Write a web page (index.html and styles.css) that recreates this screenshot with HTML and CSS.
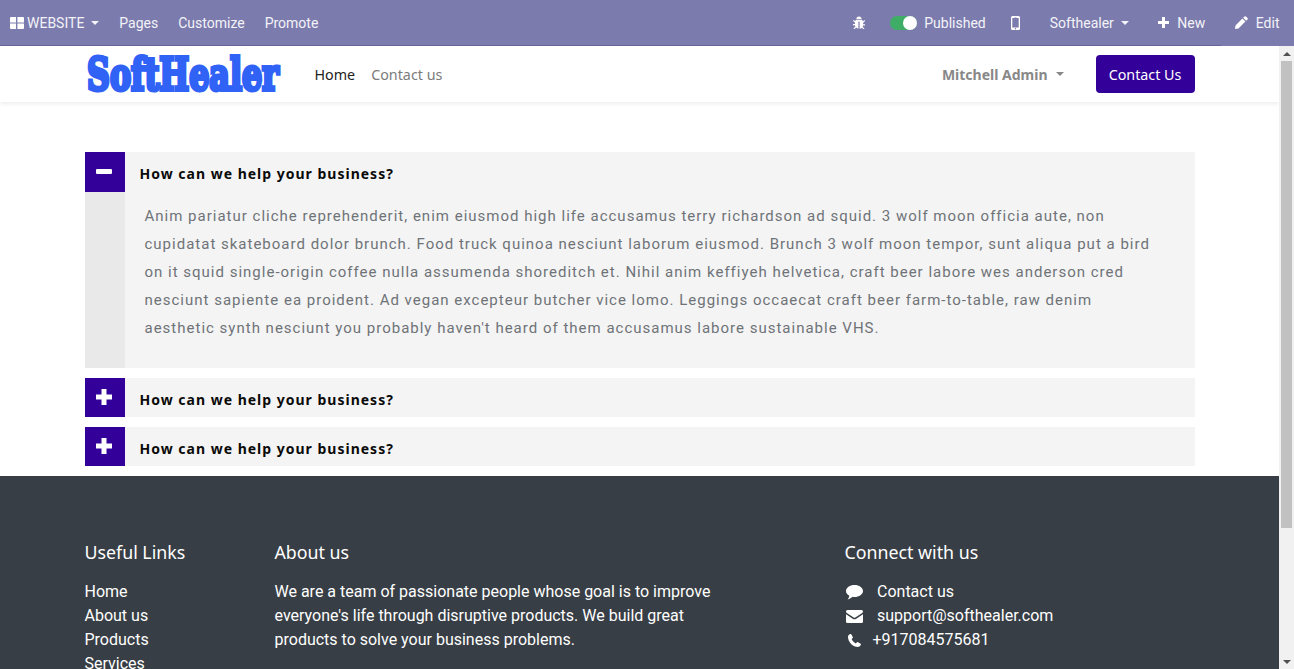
FILE: index.html
```html
<!DOCTYPE html>
<html lang="en">
<head>
<meta charset="utf-8">
<title>SoftHealer</title>
<link rel="stylesheet" href="styles.css">
</head>
<body>
<header class="topbar">
  <div class="top-group">
    <a class="top-item brand-item">
      <svg class="ic ic-grid" viewBox="0 0 14 12"><path d="M0 1a1 1 0 0 1 1-1h5v5.400H0zM7.400 0H13a1 1 0 0 1 1 1v4.400H7.400zM0 6.600h6V12H1a1 1 0 0 1-1-1zM7.400 6.600H14V11a1 1 0 0 1-1 1H7.400z"/></svg>
      <span>WEBSITE</span><i class="caret caret-website"></i>
    </a>
    <a class="top-item">Pages</a>
    <a class="top-item">Customize</a>
    <a class="top-item">Promote</a>
  </div>
  <div class="top-group">
    <svg class="ic ic-bug" viewBox="0 0 12 13"><path d="M3.400 3a2.600 2.600 0 0 1 5.200 0zM3 3.800h6c.5.500.8 1.100.9 1.700l1.400-1.400.8.800-2 2v1.400h2.100v1.100H10c0 .5-.2 1-.4 1.400l1.900 1.900-.8.800-1.800-1.800c-.6.700-1.400 1-2.300 1.100V5.500h-1.200v7.100c-.9-.1-1.700-.4-2.300-1.100L1.300 13.300l-.8-.8 1.900-1.900C2.200 10.200 2 9.700 2 9.200H-.1V8.100H2V6.700l-2-2 .8-.8 1.400 1.400c0-.5.300-1.100.8-1.500z"/></svg>
    <span class="toggle"><i class="knob"></i></span>
    <a class="top-item published">Published</a>
    <svg class="ic ic-mobile" viewBox="0 0 9 14"><path fill-rule="evenodd" d="M1.500 0h6A1.500 1.500 0 0 1 9 1.500v11A1.500 1.500 0 0 1 7.500 14h-6A1.500 1.500 0 0 1 0 12.500v-11A1.500 1.500 0 0 1 1.500 0zM1.300 2v9.500h6.400V2zm2.200-1.100v.5h2V.9zM4.500 12a.7.7 0 1 0 0 1.400.7.7 0 0 0 0-1.400z"/></svg>
    <a class="top-item company">Softhealer<i class="caret caret-company"></i></a>
    <a class="top-item new">
      <svg class="ic ic-plus" viewBox="0 0 11 11"><path d="M4 0h3v4h4v3H7v4H4V7H0V4h4z"/></svg>New
    </a>
    <a class="top-item edit">
      <svg class="ic ic-pencil" viewBox="0 0 13 13"><path d="M9.500.5a1 1 0 0 1 1.400 0l1.600 1.600a1 1 0 0 1 0 1.400L11.200 4.800 8.200 1.800zM7.400 2.600l3 3-6.900 6.900L0 13l.5-3.500z"/></svg>Edit
    </a>
  </div>
</header>
<div class="viewport">
  <div class="page">
    <nav class="site-nav">
      <div class="container nav-row">
        <div class="logo-wrap"><span class="logo">SoftHealer</span></div>
        <a class="nav-link active">Home</a>
        <a class="nav-link">Contact us</a>
        <a class="user">Mitchell Admin<i class="caret caret-user"></i></a>
        <a class="cta">Contact Us</a>
      </div>
    </nav>
    <main class="container accordion">
      <section class="acc-item">
        <div class="acc-head">
          <span class="acc-btn"><svg class="acc-ic" viewBox="0 0 16 16"><rect x="0" y="5" width="16" height="5" rx="1"/></svg></span>
          <h3 class="acc-title">How can we help your business?</h3>
        </div>
        <div class="acc-body">
          <p class="acc-text">Anim pariatur cliche reprehenderit, enim eiusmod high life accusamus terry richardson ad squid. 3 wolf moon officia aute, non cupidatat skateboard dolor brunch. Food truck quinoa nesciunt laborum eiusmod. Brunch 3 wolf moon tempor, sunt aliqua put a bird on it squid single-origin coffee nulla assumenda shoreditch et. Nihil anim keffiyeh helvetica, craft beer labore wes anderson cred nesciunt sapiente ea proident. Ad vegan excepteur butcher vice lomo. Leggings occaecat craft beer farm-to-table, raw denim aesthetic synth nesciunt you probably haven't heard of them accusamus labore sustainable VHS.</p>
        </div>
      </section>
      <section class="acc-item">
        <div class="acc-head closed">
          <span class="acc-btn"><svg class="acc-ic" viewBox="0 0 16 16"><path d="M5.500 0h5v5.500H16v5h-5.500V16h-5v-5.500H0v-5h5.500z"/></svg></span>
          <h3 class="acc-title">How can we help your business?</h3>
        </div>
      </section>
      <section class="acc-item">
        <div class="acc-head closed">
          <span class="acc-btn"><svg class="acc-ic" viewBox="0 0 16 16"><path d="M5.500 0h5v5.500H16v5h-5.500V16h-5v-5.500H0v-5h5.500z"/></svg></span>
          <h3 class="acc-title">How can we help your business?</h3>
        </div>
      </section>
    </main>
    <footer class="footer">
      <div class="container footer-row">
        <div class="col-links">
          <h4 class="foot-title">Useful Links</h4>
          <ul class="foot-list">
            <li>Home</li>
            <li>About us</li>
            <li>Products</li>
            <li>Services</li>
          </ul>
        </div>
        <div class="col-about">
          <h4 class="foot-title">About us</h4>
          <p class="about-text">We are a team of passionate people whose goal is to improve everyone's life through disruptive products. We build great products to solve your business problems.</p>
        </div>
        <div class="col-connect">
          <h4 class="foot-title">Connect with us</h4>
          <ul class="foot-list">
            <li class="contact-row">
              <svg class="ic ic-comment" viewBox="0 0 17 15"><path d="M8.500 0C13.200 0 17 2.700 17 6s-3.800 6-8.500 6c-.7 0-1.300-.1-1.900-.2C5.500 13 3.600 14 1.600 14.500c.8-1 1.500-2 1.700-3.700C1.300 9.700 0 8 0 6c0-3.300 3.800-6 8.500-6z"/></svg>
              <span>Contact us</span>
            </li>
            <li class="contact-row">
              <svg class="ic ic-env" viewBox="0 0 17 13"><path d="M1.500 0h14A1.500 1.500 0 0 1 17 1.500c0 .6-.3 1.100-.8 1.500L9.300 7.600a1.500 1.500 0 0 1-1.600 0L.8 3C.3 2.600 0 2.100 0 1.500A1.500 1.500 0 0 1 1.500 0zM0 4.300l7.100 4.600c.8.500 2 .5 2.800 0L17 4.300v7.200a1.500 1.500 0 0 1-1.500 1.500h-14A1.500 1.500 0 0 1 0 11.500z"/></svg>
              <span>support@softhealer.com</span>
            </li>
            <li class="contact-row">
              <svg class="ic ic-phone" viewBox="0 0 13 13"><path d="M3.200.2 4.800 3c.2.400.1.700-.1 1L3.600 5.100c.7 1.800 2.300 3.500 4.200 4.300L9 8.300c.3-.3.700-.3 1-.1l2.700 1.600c.3.200.3.500.2.800-.5 1.300-1.500 2.400-3 2.400C5 13 0 8 0 3 0 1.600 1 .6 2.300.1c.4-.1.700-.1.900.1z"/></svg>
              <span>+917084575681</span>
            </li>
          </ul>
        </div>
      </div>
    </footer>
  </div>
  <aside class="scrollbar">
    <i class="arrow arrow-up"></i>
    <div class="scroll-track"><div class="scroll-thumb"></div></div>
    <i class="arrow arrow-down"></i>
  </aside>
</div>
</body>
</html>
```
FILE: styles.css
```css
* { box-sizing: border-box; }
html, body { margin: 0; height: 100%; overflow: hidden; }
body { display: flex; flex-direction: column; font-family: Roboto, sans-serif; background: #fff; }

.topbar {
  flex: 0 0 46px;
  display: flex;
  justify-content: space-between;
  align-items: center;
  padding: 0 14.500px 0 10px;
  background: #7c7bad;
  color: #fff;
  font-size: 14px;
  border-bottom: 1px solid;
  border-image: linear-gradient(to right, #66659a 1220px, #7c7bad 1220px) 1;
}
.top-group { display: flex; align-items: center; }
.top-item { display: flex; align-items: center; color: #f3f3f8; margin-right: 20px; white-space: nowrap; }
.top-group:last-child .top-item:last-child { margin-right: 0; }
.ic { display: block; fill: #fff; flex: none; }
.ic-grid { width: 14px; height: 12px; margin-right: 3px; }
.caret { display: inline-block; width: 0; height: 0; border-left: 4px solid transparent; border-right: 4px solid transparent; border-top: 4px solid currentColor; }
.caret-website { margin-left: 7px; }
.ic-bug { width: 12px; height: 13px; margin-right: 25px; }
.toggle { width: 27px; height: 14px; margin-right: 7px; border-radius: 7px; background: #40ad67; display: flex; justify-content: flex-end; }
.knob { display: block; width: 14px; height: 14px; border-radius: 50%; background: #fff; }
.published { margin-right: 25px; }
.ic-mobile { width: 9px; height: 14px; margin-right: 30px; }
.company { margin-right: 29.500px; }
.caret-company { margin-left: 7px; }
.new { margin-right: 30px; }
.ic-plus { width: 11px; height: 11px; margin-right: 8px; }
.ic-pencil { width: 13px; height: 13px; margin-right: 7.500px; }

.viewport { flex: 1; min-height: 0; display: flex; }
.page { flex: 1; min-width: 0; overflow: hidden; }

.scrollbar { flex: 0 0 15px; display: flex; flex-direction: column; align-items: center; background: #f1f1f1; padding: 6px 0 5px; }
.scroll-track { flex: 1; width: 100%; padding: 5px 2px 0 2px; min-height: 0; }
.scroll-thumb { height: 467px; background: #c1c1c1; }
.arrow { display: block; width: 0; height: 0; border-left: 4px solid transparent; border-right: 4px solid transparent; flex: none; }
.arrow-up { border-bottom: 4px solid #505050; }
.arrow-down { border-top: 4px solid #505050; }

.container { width: 1110px; margin: 0 auto; }

.site-nav { height: 56px; background: #fff; box-shadow: 0 2px 4px rgba(0,0,0,.07); position: relative; }
.nav-row { display: flex; align-items: center; height: 100%; }
.logo-wrap { width: 230px; flex: none; white-space: nowrap; }
.logo {
  display: inline-block;
  transform: scaleX(.72);
  transform-origin: left center;
  margin: 2px 0 0 2.500px;
  font-family: "DejaVu Serif", serif;
  font-weight: 700;
  font-size: 44px;
  line-height: 44px;
  color: #2f62f5;
  -webkit-text-stroke: 4px #2f62f5;
}
.nav-link { font-family: "Noto Sans", sans-serif; font-size: 14.300px; color: #7b7b7b; margin-right: 16px; }
.nav-link.active { color: #222; }
.user { display: flex; align-items: center; margin-left: auto; font-family: "Noto Sans", sans-serif; font-weight: 700; font-size: 14px; color: #888; }
.caret-user { margin-left: 8px; border-left-width: 4.500px; border-right-width: 4.500px; border-top-width: 4.500px; }
.cta { margin-left: 32px; width: 99px; height: 38px; display: flex; align-items: center; justify-content: center; background: #330099; color: #fff; border-radius: 4px; font-family: "Noto Sans", sans-serif; font-size: 14.300px; }

.accordion { padding-top: 50px; padding-bottom: 10px; }
.acc-item { margin-bottom: 10px; background: #f4f4f4; }
.acc-item:last-child { margin-bottom: 0; }
.acc-head { display: flex; height: 40px; }
.acc-head.closed { height: 39px; }
.acc-btn { flex: 0 0 40px; background: #330099; display: flex; align-items: center; justify-content: center; padding: 0 1px 1px 0; }
.acc-ic { width: 16px; height: 16px; fill: #fff; display: block; }
.acc-title { margin: 0 0 0 15px; font-family: "Noto Sans", sans-serif; font-weight: 700; font-size: 14px; letter-spacing: 1px; line-height: 43px; color: #0a0a0a; }
.acc-body { border-left: 40px solid #e9e9e9; padding: 10px 35px 26px 20px; }
.acc-text { margin: 0; font-size: 15px; line-height: 28px; letter-spacing: 1px; color: #6f7378; }

.footer { background: #383e45; color: #fff; height: 361px; padding-top: 63px; }
.footer-row { display: flex; }
.col-links { flex: 0 0 190px; }
.col-about { flex: 0 0 570px; }
.col-connect { flex: 1; }
.foot-title { margin: 0 0 15px; font-family: "Noto Sans", sans-serif; font-weight: 400; font-size: 17.800px; line-height: 26px; }
.foot-list { margin: 0; padding: 0; list-style: none; font-size: 16px; line-height: 24px; }
.about-text { margin: 0; width: 450px; font-size: 16px; line-height: 24px; }
.contact-row { display: flex; align-items: center; }
.ic-comment { width: 17px; height: 15px; margin: 0 14.500px 0 1px; }
.ic-env { width: 17px; height: 13px; margin: 0 14.500px 0 1px; }
.ic-phone { width: 13px; height: 13px; margin: 0 12px 0 3px; }
```
